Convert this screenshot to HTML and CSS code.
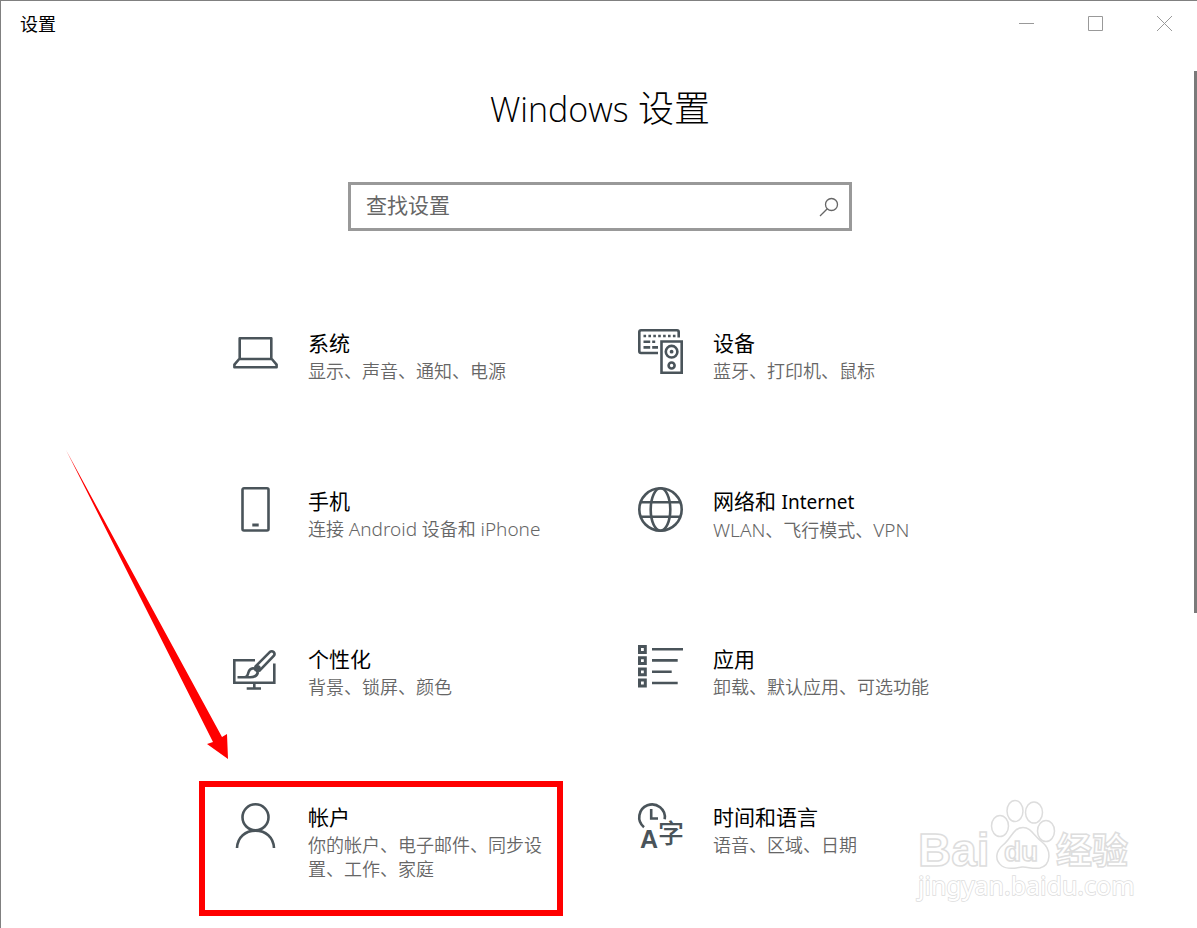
FILE: index.html
```html
<!DOCTYPE html>
<html lang="zh-CN">
<head>
<meta charset="utf-8">
<title>设置</title>
<link rel="stylesheet" href="styles.css">
</head>
<body>
<div class="window">
  <header class="titlebar">
    <span class="titlebar-name">设置</span>
    <div class="window-controls">
      <button class="window-button" type="button" aria-label="最小化"><svg width="15" height="15" viewBox="0 0 15 15"><path d="M0 7.5H15"/></svg></button>
      <button class="window-button" type="button" aria-label="最大化"><svg width="15" height="15" viewBox="0 0 15 15"><path d="M.5 .5H14.5V14.5H.5Z"/></svg></button>
      <button class="window-button" type="button" aria-label="关闭"><svg width="15" height="15" viewBox="0 0 15 15"><path d="M0 0L15 15M15 0L0 15"/></svg></button>
    </div>
  </header>

  <main class="content">
    <h1 class="heading"><span class="heading-latin">Windows</span> 设置</h1>
    <form class="search" role="search">
      <input class="search-input" type="text" placeholder="查找设置" aria-label="查找设置">
      <button class="search-button" type="button" aria-label="搜索"><svg width="20" height="20" viewBox="0 0 20 20"><circle cx="12.5" cy="7.5" r="6"/><path d="M8.3 11.8L1 19"/></svg></button>
    </form>

    <nav class="tiles" aria-label="设置类别">
      <a class="tile" href="#system">
        <svg class="tile-icon" viewBox="0 0 46 46"><path d="M6.7 30V10.2H38.3V30M6.2 31H38.8L43.6 36.6V39.3H1.4V36.6Z" stroke-linejoin="round"/></svg>
        <span class="tile-text"><span class="tile-title">系统</span><span class="tile-note">显示、声音、通知、电源</span></span>
      </a>
      <a class="tile" href="#devices">
        <svg class="tile-icon" viewBox="0 0 46 46"><path d="M20 25H3Q1.3 25 1.3 23.3V4Q1.3 2.3 3 2.3H39Q40.7 2.3 40.7 4V9.5M23.5 13.5H43.7V44.7H23.5Z"/><circle cx="33.6" cy="23.7" r="5.8"/><circle cx="33.6" cy="37.5" r="3"/><circle cx="33.6" cy="23.7" r="1.9" class="solid"/><path d="M5.5 8H38" stroke-dasharray="2.6 2.3"/><path d="M5.5 13.8H12.2M14.2 13.8H17.2M5.5 19.4H12.2M14.2 19.4H20"/></svg>
        <span class="tile-text"><span class="tile-title">设备</span><span class="tile-note">蓝牙、打印机、鼠标</span></span>
      </a>
      <a class="tile" href="#phone">
        <svg class="tile-icon" viewBox="0 0 46 46"><rect x="9.5" y="2.3" width="26" height="42.2" rx="1.5"/><path d="M19.3 39H25.7" stroke-width="3"/></svg>
        <span class="tile-text"><span class="tile-title">手机</span><span class="tile-note">连接 <span class="note-latin">Android</span> 设备和 <span class="note-latin">iPhone</span></span></span>
      </a>
      <a class="tile" href="#network">
        <svg class="tile-icon" viewBox="0 0 46 46"><circle cx="22.5" cy="23.5" r="21.2"/><ellipse cx="22.5" cy="23.5" rx="9.8" ry="21.2"/><path d="M2.5 16.3H42.5M2.5 30.7H42.5"/></svg>
        <span class="tile-text"><span class="tile-title">网络和 <span class="title-latin">Internet</span></span><span class="tile-note"><span class="note-latin">WLAN</span>、飞行模式、<span class="note-latin">VPN</span></span></span>
      </a>
      <a class="tile" href="#personalization">
        <svg class="tile-icon" viewBox="0 0 46 46"><path d="M22 16.3H1.3V38.8H41.3V19.5M21.3 38.8V44.5M13.7 44.5H28"/><path d="M22.8 22.2L36.7 8.1Q38.8 6.4 40.6 8Q42.4 9.9 40.7 12L26.8 26.4Z"/><path d="M4.5 33.3H11.5Q14.5 33 15.4 28.5Q16.5 24.7 20 24.3Q24.6 24.8 24.7 29Q23.3 33.3 17 33.3H11.5"/><circle cx="24.4" cy="24.5" r="2.2"/></svg>
        <span class="tile-text"><span class="tile-title">个性化</span><span class="tile-note">背景、锁屏、颜色</span></span>
      </a>
      <a class="tile" href="#apps">
        <svg class="tile-icon" viewBox="0 0 46 46"><path d="M1.5 2.6H7.3V8.4H1.5ZM1.5 13.7H7.3V19.5H1.5ZM1.5 24.9H7.3V30.7H1.5ZM1.5 36.1H7.3V41.9H1.5Z" stroke-width="3"/><path d="M14 5.2H45M14 16.4H39.7M14 27.7H33.7M14 39H39.7"/></svg>
        <span class="tile-text"><span class="tile-title">应用</span><span class="tile-note">卸载、默认应用、可选功能</span></span>
      </a>
      <a class="tile tile-marked" href="#accounts">
        <svg class="tile-icon" viewBox="0 0 46 46"><circle cx="22.5" cy="15.3" r="13"/><path d="M4 46C4.5 35 12.5 28.6 22.5 28.6S40.5 35 41 46"/></svg>
        <span class="tile-text"><span class="tile-title">帐户</span><span class="tile-note">你的帐户、电子邮件、同步设置、工作、家庭</span></span>
      </a>
      <a class="tile" href="#time">
        <svg class="tile-icon" viewBox="0 0 46 46"><path d="M6 25.2A12.8 12.8 0 1 1 26.7 17.2M13.2 7V16.5H20"/><text class="glyph" x="2" y="46" font-size="25">A</text><text class="glyph glyph-cjk" x="20" y="41" font-size="26">字</text></svg>
        <span class="tile-text"><span class="tile-title">时间和语言</span><span class="tile-note">语音、区域、日期</span></span>
      </a>
    </nav>
  </main>

  <div class="scroll-thumb"></div>

  <svg class="arrow" viewBox="0 0 164 310" aria-hidden="true"><path d="M0 0L147 292L141 294L162 309L161 284L156 287Z"/></svg>

  <svg class="watermark" viewBox="0 0 224 110" role="img" aria-label="Baidu 经验">
    <text x="5" y="81" font-size="46" class="mark-latin">Bai</text>
    <g>
      <ellipse cx="87" cy="41" rx="8.5" ry="10.5"/><ellipse cx="102" cy="26" rx="8" ry="10.5"/><ellipse cx="121" cy="27.5" rx="8.5" ry="10.5"/><ellipse cx="133" cy="46" rx="8.5" ry="10.5"/>
      <path d="M110 42.5C118 42.5 121 51 129 57C139 65 138 80 127 83C119 84.5 115 81.5 109 82C102 83.5 94 84.5 89 81C81 75 83 66 90 60C98 54 100 42.5 110 42.5Z"/>
    </g>
    <text x="91" y="76" font-size="28" class="mark-latin">du</text>
    <text x="143" y="79" font-size="36" class="mark-cjk">经验</text>
    <text x="5" y="110" font-size="25" class="mark-url">jingyan.baidu.com</text>
  </svg>
</div>
</body>
</html>
```

FILE: styles.css
```css
* {
  box-sizing: border-box;
}

body {
  margin: 0;
  background: #fff;
  color: #000;
  font-family: "Noto Sans", "Noto Sans CJK SC", sans-serif;
}

button {
  padding: 0;
  border: 0;
  background: transparent;
}

svg {
  fill: none;
}

.window {
  position: relative;
  min-height: 100vh;
  overflow: hidden;
  border-top: 1px solid #808080;
  border-left: 1px solid #808080;
}

.titlebar {
  display: flex;
  align-items: center;
  justify-content: space-between;
  height: 45px;
  padding-left: 19px;
}

.titlebar-name {
  font-size: 18px;
  line-height: 24px;
}

.window-controls {
  display: flex;
  height: 100%;
}

.window-button {
  display: flex;
  align-items: center;
  justify-content: center;
  width: 69px;
  padding-left: 4px;
}

.window-button svg {
  stroke: #999;
}

.content {
  display: flex;
  flex-direction: column;
  align-items: center;
  padding-left: 2px;
}

.heading {
  margin: 37px 0 47px;
  font-family: "Open Sans", "Noto Sans CJK SC", sans-serif;
  font-size: 36px;
  font-weight: 300;
  line-height: 52px;
}

.heading-latin {
  font-size: 34px;
}

.search {
  display: flex;
  align-items: center;
  width: 100%;
  max-width: 504px;
  height: 49px;
  margin-bottom: 76px;
  border: 3px solid #999;
}

.search-input {
  flex: 1;
  min-width: 0;
  height: 100%;
  padding: 0 15px 4px;
  border: 0;
  outline: 0;
  background: transparent;
  font-family: inherit;
  font-size: 21px;
}

.search-input::placeholder {
  color: #666;
  opacity: 1;
}

.search-button {
  display: flex;
  width: 30px;
}

.search-button svg {
  stroke: #666;
  stroke-width: 1.3;
}

.tiles {
  display: grid;
  grid-template-columns: repeat(auto-fit, minmax(min(100%, 320px), 405px));
  justify-content: center;
  row-gap: 23px;
  width: 100%;
  max-width: 810px;
}

.tile {
  position: relative;
  display: flex;
  gap: 29px;
  min-height: 135px;
  padding: 21px 50px 0 38px;
  color: inherit;
  text-decoration: none;
}

.tile-marked::after {
  content: "";
  position: absolute;
  inset: 0 37px 0 4px;
  border: 6px solid #f00;
}

.tile-icon {
  flex: none;
  width: 46px;
  height: 46px;
  overflow: visible;
  stroke: #4a545a;
  stroke-width: 2.6;
}

.tile-icon .solid,
.tile-icon .glyph {
  fill: #4a545a;
  stroke: none;
}

.tile-icon .glyph {
  font-family: "Liberation Sans", sans-serif;
  font-weight: 700;
}

.tile-icon .glyph-cjk {
  font-family: "Noto Sans CJK SC", sans-serif;
  font-weight: 500;
}

.tile-text {
  display: flex;
  flex-direction: column;
}

.tile-title {
  font-size: 21px;
  line-height: 31px;
}

.title-latin {
  font-size: 19px;
}

.tile-note {
  color: #666;
  font-size: 18px;
  font-weight: 350;
  line-height: 24px;
}

.note-latin {
  font-size: 19px;
  line-height: 1;
}

.scroll-thumb {
  position: absolute;
  top: 70px;
  right: 0;
  width: 3px;
  height: 542px;
  background: #7a7a7a;
}

.arrow {
  position: absolute;
  top: 449px;
  left: 65px;
  width: 164px;
  height: 310px;
  fill: #f00;
}

.watermark {
  position: absolute;
  right: 60px;
  bottom: 33px;
  width: 224px;
  height: 110px;
  overflow: visible;
  fill: #fff;
  stroke: #ddd;
  stroke-width: 1.5;
}

.mark-latin {
  font-family: "Liberation Sans", sans-serif;
  font-weight: 700;
}

.mark-cjk {
  font-family: "Noto Sans CJK SC", sans-serif;
  font-weight: 700;
}

.mark-url {
  font-family: "Noto Sans", sans-serif;
  paint-order: stroke;
}
```
